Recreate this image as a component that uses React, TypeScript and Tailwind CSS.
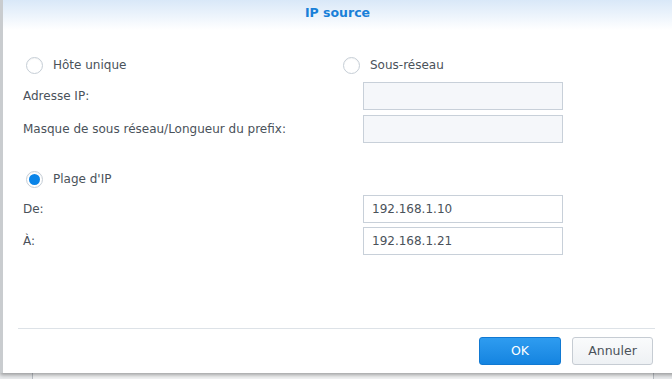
import React from 'react';

function Radio({ checked, label }: { checked?: boolean; label: string }) {
  return (
    <label className="flex items-center gap-[10px]">
      <span className="w-[17px] h-[17px] rounded-full border border-[#c6ced6] bg-white flex items-center justify-center shadow-[inset_0_1px_1px_rgba(0,0,0,0.04)]">
        {checked && <span className="w-[11px] h-[11px] rounded-full bg-[#0a84e8]"></span>}
      </span>
      <span>{label}</span>
    </label>
  );
}

function Field({ value, disabled }: { value?: string; disabled?: boolean }) {
  return (
    <div
      className={
        'w-[200px] h-[28px] border border-[#c8d0d9] flex items-center px-[8px] ' +
        (disabled ? 'bg-[#f5f7fa]' : 'bg-white')
      }
    >
      {value}
    </div>
  );
}

export default function App() {
  return (
    <div className="w-[672px] h-[379px] overflow-hidden bg-[#e9ebed] font-['DejaVu_Sans',sans-serif] text-[12px] text-[#4a525a] relative">
      {/* window behind */}
      <div className="absolute left-[32px] right-[18px] top-[360px] bottom-0 bg-[#f2f3f4] border-x border-[#b9bec4]"></div>

      {/* Dialog */}
      <div className="relative w-[690px] h-[373px] bg-white border-l-[3px] border-[#c9cccf] shadow-[0_2px_4px_rgba(0,0,0,0.35)] flex flex-col">
        {/* Header */}
        <div className="h-[30px] bg-gradient-to-b from-[#d9e8f8] to-white flex items-center justify-center pr-[18px]">
          <span className="font-bold text-[#1a80d8] text-[12.5px] -mt-[4px]">IP source</span>
        </div>

        {/* Body */}
        <div className="flex-1 pl-[20px] pr-[18px] pt-[25px]">
          <div className="flex h-[20px] items-center">
            <div className="w-[320px] pl-[3px]">
              <Radio label="Hôte unique" />
            </div>
            <Radio label="Sous-réseau" />
          </div>

          <div className="mt-[7px] flex flex-col gap-[5px]">
            <div className="flex items-center">
              <div className="w-[340px]">Adresse IP:</div>
              <Field disabled />
            </div>
            <div className="flex items-center">
              <div className="w-[340px]">Masque de sous réseau/Longueur du prefix:</div>
              <Field disabled />
            </div>
          </div>

          <div className="mt-[26px] flex h-[20px] items-center pl-[3px]">
            <Radio checked label="Plage d'IP" />
          </div>

          <div className="mt-[6px] flex flex-col gap-[4px]">
            <div className="flex items-center">
              <div className="w-[340px]">De:</div>
              <Field value="192.168.1.10" />
            </div>
            <div className="flex items-center">
              <div className="w-[340px]">À:</div>
              <Field value="192.168.1.21" />
            </div>
          </div>
        </div>

        {/* Footer */}
        <div className="ml-[15px] mr-[35px] border-t border-[#dde2e7] h-[45px] flex items-center justify-end gap-[11px]">
          <button className="w-[82px] h-[28px] rounded-[3px] bg-gradient-to-b from-[#2e9cf0] to-[#1484e0] border border-[#1179d2] text-white text-[12.5px]">
            OK
          </button>
          <button className="w-[81px] h-[28px] rounded-[3px] bg-gradient-to-b from-[#fafbfc] to-[#eef1f4] border border-[#c6ccd3] text-[#4a525a] text-[12.5px] mr-[2px]">
            Annuler
          </button>
        </div>
      </div>
    </div>
  );
}
